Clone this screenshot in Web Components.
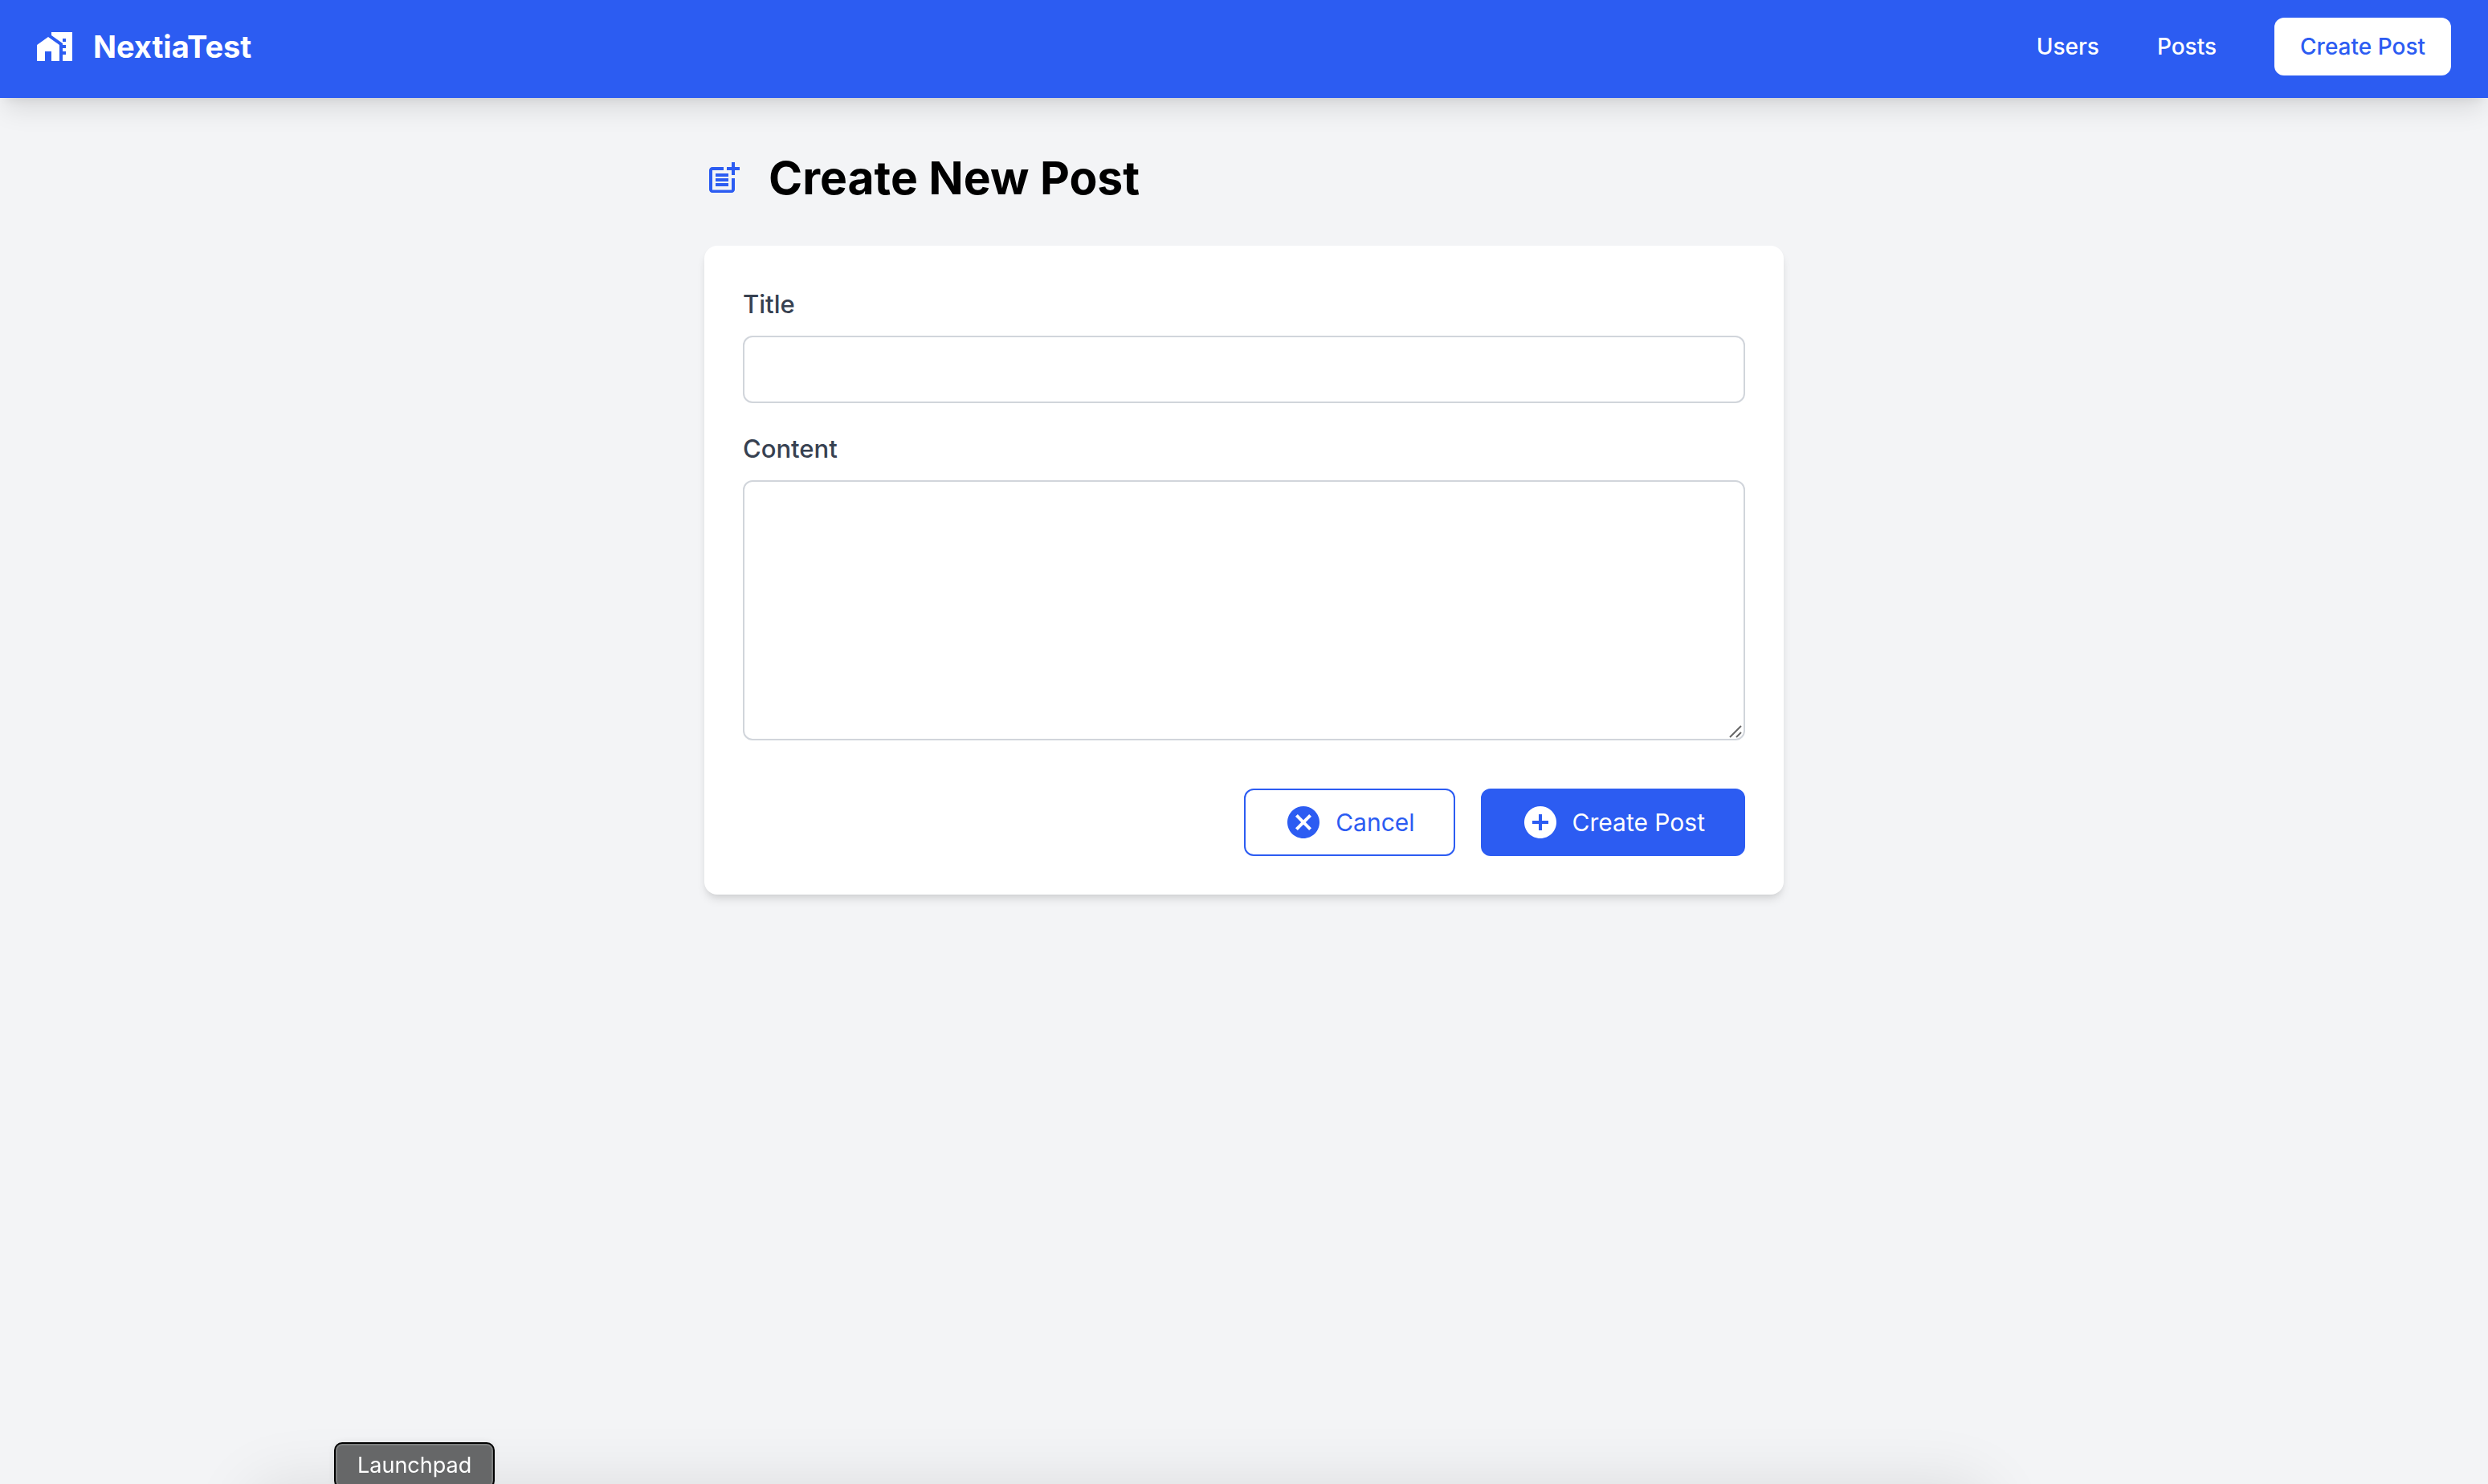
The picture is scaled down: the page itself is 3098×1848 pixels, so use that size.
<!DOCTYPE html>
<html lang="en">
<head>
<meta charset="utf-8">
<title>NextiaTest</title>
<style>
  :root { --blue: #2c5cf2; --ink: #374151; --line: #d1d5db; --page: #f3f4f6; }
  html, body { margin: 0; min-height: 100%; }
  body {
    background: var(--page); color: #000;
    font: 400 30px/48px Inter, "Liberation Sans", sans-serif;
    overflow: hidden;
  }
</style>
</head>
<body>
<app-shell>
  <app-header slot="header" brand="NextiaTest">
    <nav-link href="#users">Users</nav-link>
    <nav-link href="#posts">Posts</nav-link>
    <nav-link href="#create" pill>Create Post</nav-link>
  </app-header>
  <page-heading>Create New Post</page-heading>
  <post-form></post-form>
</app-shell>
<dock-hint>Launchpad</dock-hint>

<script>
const ICONS = {
  home: '<path d="M1 11v10h5v-6h4v6h5V11L8 6z"/><path d="M10 3v1.97l7 5V11h2v2h-2v2h2v2h-2v4h6V3H10zm9 6h-2V7h2v2z"/>',
  post: '<path d="M17 19.22H5V7h7V5H5c-1.1 0-2 .9-2 2v12c0 1.1.9 2 2 2h12c1.1 0 2-.9 2-2v-7h-2v7.22z"/><path d="M19 2h-2v3h-3c.01.01 0 2 0 2h3v2.99c.01.01 2 0 2 0V7h3V5h-3V2zM7 9h8v2H7zM7 12v2h8v-2h-3zM7 15h8v2H7z"/>',
  cancel: '<path d="M12 2C6.47 2 2 6.47 2 12s4.47 10 10 10 10-4.47 10-10S17.53 2 12 2zm5 13.59L15.59 17 12 13.41 8.41 17 7 15.59 10.59 12 7 8.41 8.41 7 12 10.59 15.59 7 17 8.41 13.41 12 17 15.59z"/>',
  add: '<path d="M12 2C6.48 2 2 6.48 2 12s4.48 10 10 10 10-4.48 10-10S17.52 2 12 2zm5 11h-4v4h-2v-4H7v-2h4V7h2v4h4v2z"/>'
};
const define = (name, render) => customElements.define(name, class extends HTMLElement {
  constructor() { super(); this.attachShadow({ mode: 'open' }); }
  connectedCallback() { this.shadowRoot.innerHTML = render(this); }
});

define('ui-icon', el => `
  <style>:host{display:block;flex:none;width:48px;height:48px}svg{display:block;width:100%;height:100%}</style>
  <svg viewBox="0 0 24 24" fill="currentColor" aria-hidden="true">${ICONS[el.getAttribute('name')]}</svg>`);

define('app-shell', () => `
  <style>
    :host{display:block}
    main{max-width:1344px;margin:0 auto;padding:64px 32px}
  </style>
  <slot name="header"></slot><main><slot></slot></main>`);

define('app-header', el => `
  <style>
    :host{display:block;background:var(--blue);color:#fff;
      box-shadow:0 20px 30px -6px rgb(0 0 0/.1),0 8px 12px -8px rgb(0 0 0/.1)}
    header{display:flex;align-items:center;justify-content:space-between;padding:22px 46px 28px 44px}
    .brand{display:flex;align-items:center;gap:24px;color:inherit;text-decoration:none;font-size:38px;line-height:48px;font-weight:700}
    nav{display:flex;align-items:center;gap:72px}
  </style>
  <header>
    <a class="brand" href="#home"><ui-icon name="home"></ui-icon><span>${el.getAttribute('brand')}</span></a>
    <nav><slot></slot></nav>
  </header>`);

define('nav-link', el => `
  <style>
    :host{display:block}
    a{display:block;color:#fff;text-decoration:none;font-size:28px;line-height:40px;font-weight:500}
    :host([pill]) a{background:#fff;color:var(--blue);padding:16px 32px;border-radius:12px}
  </style>
  <a href="${el.getAttribute('href')}"><slot></slot></a>`);

define('page-heading', () => `
  <style>
    :host{display:flex;align-items:center;gap:32px;margin-bottom:48px}
    ui-icon{color:var(--blue)}
    h1{margin:0;font-size:57px;line-height:72px;font-weight:700}
  </style>
  <ui-icon name="post"></ui-icon><h1><slot></slot></h1>`);

define('ui-button', el => `
  <style>
    :host{display:block}
    button{display:flex;align-items:center;gap:16px;margin:0;padding:16px 48px;border:2px solid var(--blue);
      border-radius:12px;background:#fff;color:var(--blue);font:inherit}
    :host([primary]) button{background:var(--blue);color:#fff}
  </style>
  <button type="button"><ui-icon name="${el.getAttribute('icon')}"></ui-icon><span><slot></slot></span></button>`);

define('post-form', () => `
  <style>
    :host{display:block;background:#fff;border-radius:16px;padding:48px;
      box-shadow:0 8px 12px -2px rgb(0 0 0/.1),0 4px 8px -4px rgb(0 0 0/.1)}
    form{display:flex;flex-direction:column}
    label{color:var(--ink);font-size:31px;line-height:50px;font-weight:500;margin-bottom:14px}
    input,textarea{display:block;box-sizing:border-box;width:100%;margin:0;padding:16px 24px;
      border:2px solid var(--line);border-radius:12px;background:#fff;font:inherit;color:inherit;outline:0}
    input{height:84px;margin-bottom:32px}
    textarea{height:324px;resize:none}
    .area{display:grid;margin-bottom:60px}
    .area>*{grid-area:1/1}
    .grip{place-self:end;width:20px;height:20px;margin:2px;pointer-events:none}
    .actions{display:flex;justify-content:flex-end;gap:32px}
  </style>
  <form>
    <label for="title">Title</label>
    <input id="title" type="text">
    <label for="content">Content</label>
    <div class="area">
      <textarea id="content"></textarea>
      <svg class="grip" viewBox="0 0 20 20" fill="none" stroke="#666" stroke-width="2" aria-hidden="true"><path d="M3 18L17 4M11 18L17 12"/></svg>
    </div>
    <div class="actions">
      <ui-button icon="cancel">Cancel</ui-button>
      <ui-button icon="add" primary>Create Post</ui-button>
    </div>
  </form>`);

define('dock-hint', () => `
  <style>
    :host{position:fixed;inset:auto 0 0 0;height:52px;display:block;pointer-events:none}
    .shade{position:absolute;left:310px;right:620px;top:100%;height:100px;border-radius:40px;box-shadow:0 0 80px 0 rgb(0 0 0/.1)}
    .tip{position:absolute;left:416px;top:0;box-sizing:border-box;padding:8px 27px;
      border:2px solid #000;border-radius:10px;background:#666768;color:#fff;
      font-size:27px;line-height:38px;box-shadow:inset 0 0 0 2px #7c7e7e,0 0 12px rgb(0 0 0/.08)}
  </style>
  <div class="shade"></div><div class="tip"><slot></slot></div>`);
</script>
</body>
</html>
